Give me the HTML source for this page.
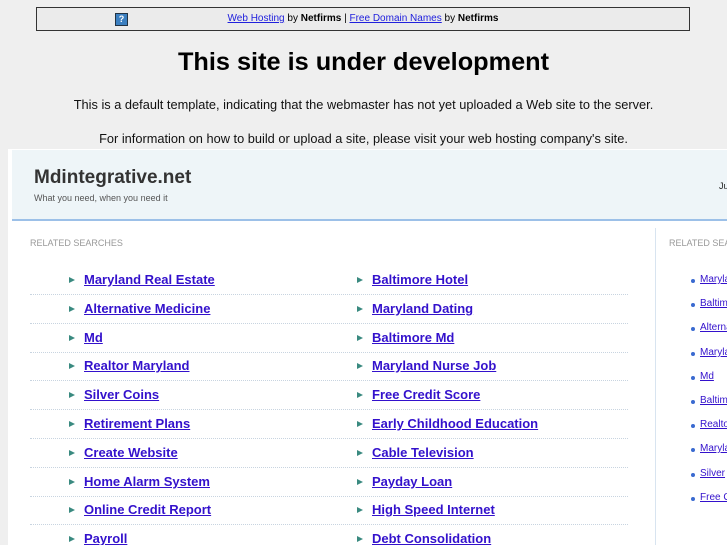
<!DOCTYPE html>
<html><head><style>
body{margin:0;width:727px;height:545px;overflow:hidden;background:#efefef;font-family:"Liberation Sans",sans-serif;position:relative}
.top{position:absolute;left:36px;top:7px;width:652px;height:22px;border:1px solid #333;background:#ebebeb;font-size:10px;line-height:22px;text-align:center}
.top a{color:#2020dd;text-decoration:underline}
.q{position:absolute;left:78px;top:5px;width:11px;height:11px;background:#3b7fc0;border:1px solid #234;color:#fff;font-size:9px;line-height:11px;text-align:center;font-weight:bold}
h1{position:absolute;top:48px;left:0;width:727px;margin:0;text-align:center;font-size:25.3px;color:#000}
.p{position:absolute;left:0;width:727px;text-align:center;font-size:12.8px;color:#111}
.frame{position:absolute;left:8px;top:149px;width:719px;height:396px;background:#fff;overflow:hidden}
.hdr{position:absolute;left:4px;top:1px;width:715px;height:69px;background:#eef5f8;border-bottom:2px solid #9cc0e8}
.title{position:absolute;left:22px;top:17px;font-size:19px;font-weight:bold;color:#333}
.tag{position:absolute;left:22px;top:43px;font-size:9px;color:#555}
.ju{position:absolute;left:707px;top:31px;font-size:9px;color:#222}
.lbl{position:absolute;font-size:9px;color:#999;top:89px;white-space:nowrap}
.vl{position:absolute;left:647px;top:79px;width:1px;height:320px;background:#d8e4f0}
.row{position:absolute;left:22px;width:598px;height:28.8px;border-bottom:1px dotted #c8d4e0}
.it{position:absolute;top:7px;font-size:13px;font-weight:bold;color:#3311cc;text-decoration:underline;white-space:nowrap}
.it:before{content:"";position:absolute;left:-15px;top:5px;width:0;height:0;border-left:6px solid #3a8a80;border-top:3px solid transparent;border-bottom:3px solid transparent}
.r{position:absolute;left:692px;font-size:10px;color:#3311cc;text-decoration:underline;white-space:nowrap}
.r:before{content:"";position:absolute;left:-9px;top:5px;width:4px;height:4px;border-radius:2px;background:#3a6ad0}
</style></head><body>
<div class="top"><span class="q">?</span><a>Web Hosting</a> by <b>Netfirms</b> | <a>Free Domain Names</a> by <b>Netfirms</b></div>
<h1>This site is under development</h1>
<div class="p" style="top:97px">This is a default template, indicating that the webmaster has not yet uploaded a Web site to the server.</div>
<div class="p" style="top:131px">For information on how to build or upload a site, please visit your web hosting company's site.</div>
<div class="frame">
<div class="hdr"><div class="title">Mdintegrative.net</div><div class="tag">What you need, when you need it</div><div class="ju">Ju</div></div>
<div class="lbl" style="left:22px">RELATED SEARCHES</div>
<div class="lbl" style="left:661px">RELATED SEARCHES</div>
<div class="vl"></div>
<div class="row" style="top:116px"><span class="it" style="left:54px">Maryland Real Estate</span><span class="it" style="left:342px">Baltimore Hotel</span></div>
<div class="row" style="top:145px"><span class="it" style="left:54px">Alternative Medicine</span><span class="it" style="left:342px">Maryland Dating</span></div>
<div class="row" style="top:174px"><span class="it" style="left:54px">Md</span><span class="it" style="left:342px">Baltimore Md</span></div>
<div class="row" style="top:202px"><span class="it" style="left:54px">Realtor Maryland</span><span class="it" style="left:342px">Maryland Nurse Job</span></div>
<div class="row" style="top:231px"><span class="it" style="left:54px">Silver Coins</span><span class="it" style="left:342px">Free Credit Score</span></div>
<div class="row" style="top:260px"><span class="it" style="left:54px">Retirement Plans</span><span class="it" style="left:342px">Early Childhood Education</span></div>
<div class="row" style="top:289px"><span class="it" style="left:54px">Create Website</span><span class="it" style="left:342px">Cable Television</span></div>
<div class="row" style="top:318px"><span class="it" style="left:54px">Home Alarm System</span><span class="it" style="left:342px">Payday Loan</span></div>
<div class="row" style="top:346px"><span class="it" style="left:54px">Online Credit Report</span><span class="it" style="left:342px">High Speed Internet</span></div>
<div class="row" style="top:375px"><span class="it" style="left:54px">Payroll</span><span class="it" style="left:342px">Debt Consolidation</span></div>
<span class="r" style="top:125px">Maryland</span>
<span class="r" style="top:149px">Baltimore</span>
<span class="r" style="top:173px">Alternative</span>
<span class="r" style="top:198px">Maryland</span>
<span class="r" style="top:222px">Md</span>
<span class="r" style="top:246px">Baltimore</span>
<span class="r" style="top:270px">Realtor</span>
<span class="r" style="top:294px">Maryland</span>
<span class="r" style="top:319px">Silver</span>
<span class="r" style="top:343px">Free C</span>
</div>
</body></html>
